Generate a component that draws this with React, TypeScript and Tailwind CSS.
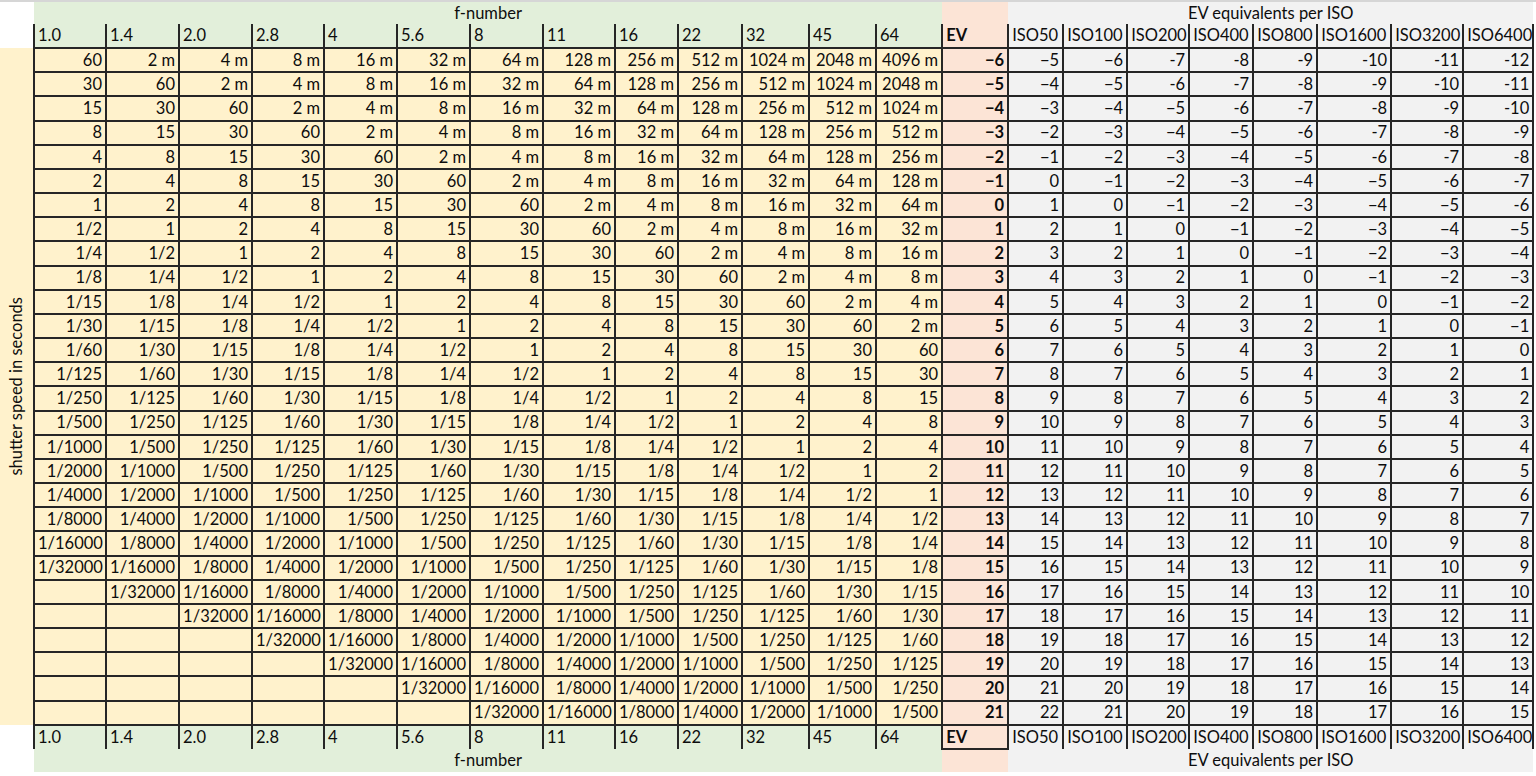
import React from "react";

const SEQ = [
  "4096 m", "2048 m", "1024 m", "512 m", "256 m", "128 m", "64 m", "32 m", "16 m", "8 m", "4 m", "2 m",
  "60", "30", "15", "8", "4", "2", "1",
  "1/2", "1/4", "1/8", "1/15", "1/30", "1/60", "1/125", "1/250", "1/500", "1/1000", "1/2000", "1/4000", "1/8000", "1/16000", "1/32000",
];
const FN = ["1.0", "1.4", "2.0", "2.8", "4", "5.6", "8", "11", "16", "22", "32", "45", "64"];
const ISO = ["ISO50", "ISO100", "ISO200", "ISO400", "ISO800", "ISO1600", "ISO3200", "ISO6400"];
const EVS = Array.from({ length: 28 }, (_, i) => i - 6);

function evLabel(ev: number) {
  return ev < 0 ? "\u2212" + Math.abs(ev) : String(ev);
}
function isoLabel(v: number, i: number) {
  if (v >= 0) return String(v);
  if (i >= 2 && v <= -6) return "-" + Math.abs(v);
  return "\u2212" + Math.abs(v);
}

const cellBase = "border-2 border-[#262626] px-[3px] py-0 text-right whitespace-nowrap overflow-hidden leading-none";
const headBase = "border-l-2 border-[#262626] px-[3px] py-0 text-left whitespace-nowrap leading-none";

function HeaderRow({ bottom }: { bottom?: boolean }) {
  return (
    <tr className="h-[24px]">
      <td className="bg-white p-0" />
      {FN.map((f) => (
        <td key={f} className={headBase + " bg-[#e2efda]"}>{f}</td>
      ))}
      <td className={headBase + " bg-[#fce4d6] font-bold" + (bottom ? " border-2" : " border-r-2")}>EV</td>
      {ISO.map((s, i) => (
        <td key={s} className={headBase + " bg-[#f2f2f2]" + (i === ISO.length - 1 ? " border-r-2" : "")}>{s}</td>
      ))}
    </tr>
  );
}

function TitleRow({ h }: { h: string }) {
  return (
    <tr className={h}>
      <td className="bg-white p-0" />
      <td colSpan={13} className="bg-[#e2efda] text-center p-0 leading-none">f-number</td>
      <td className="bg-[#fce4d6] p-0" />
      <td colSpan={8} className="bg-[#f2f2f2] text-center p-0 leading-none">EV equivalents per ISO</td>
    </tr>
  );
}

export default function App() {
  return (
    <div
      className="w-[1536px] h-[776px] overflow-hidden bg-white text-[16.5px] text-[#0d0d0d] border-t-2 border-[#d6d6d6]"
      style={{ fontFamily: "Lato, 'Open Sans', sans-serif" }}
    >
      <table className="table-fixed border-collapse w-[1533px]">
        <colgroup>
          <col className="w-[34px]" />
          <col className="w-[72px]" />
          <col className="w-[73px]" />
          <col className="w-[73px]" />
          <col className="w-[72px]" />
          <col className="w-[73px]" />
          <col className="w-[73px]" />
          <col className="w-[73px]" />
          <col className="w-[72px]" />
          <col className="w-[63px]" />
          <col className="w-[64px]" />
          <col className="w-[67px]" />
          <col className="w-[67px]" />
          <col className="w-[66px]" />
          <col className="w-[66px]" />
          <col className="w-[55px]" />
          <col className="w-[64px]" />
          <col className="w-[62px]" />
          <col className="w-[64px]" />
          <col className="w-[64px]" />
          <col className="w-[74px]" />
          <col className="w-[72px]" />
          <col className="w-[70px]" />
        </colgroup>
        <tbody>
          <TitleRow h="h-[22px]" />
          <HeaderRow />
          {EVS.map((ev, r) => (
            <tr key={ev} className="h-[24.18px]">
              {r === 0 && (
                <td rowSpan={28} className="bg-[#fff2cc] p-0 align-middle">
                  <div className="flex items-center justify-center">
                    <span className="[writing-mode:vertical-rl] rotate-180 whitespace-nowrap leading-none">
                      shutter speed in seconds
                    </span>
                  </div>
                </td>
              )}
              {FN.map((f, c) => {
                const idx = 12 - c + (ev + 6);
                const v = idx >= 0 && idx < SEQ.length ? SEQ[idx] : "";
                return (
                  <td key={f} className={cellBase + " bg-[#fff2cc]"}>{v}</td>
                );
              })}
              <td className={cellBase + " bg-[#fce4d6] font-bold"}>{evLabel(ev)}</td>
              {ISO.map((s, i) => (
                <td key={s} className={cellBase + " bg-[#f2f2f2]"}>{isoLabel(ev + 1 - i, i)}</td>
              ))}
            </tr>
          ))}
          <HeaderRow bottom />
          <TitleRow h="h-[23px]" />
        </tbody>
      </table>
    </div>
  );
}
